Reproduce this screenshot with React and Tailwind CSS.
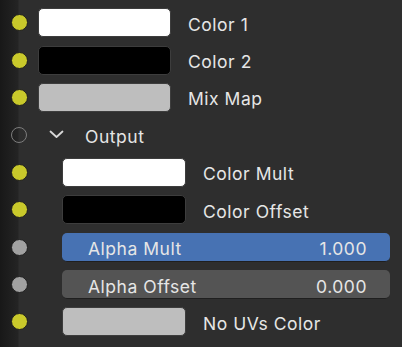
import React from 'react';

const yellow = 'bg-[#c9c92b]';

function Socket({ kind }) {
  if (kind === 'hollow') {
    return <span className="w-[16px] h-[16px] rounded-full border-[1.5px] border-[#7d7d7d] bg-transparent" />;
  }
  const fill = kind === 'gray' ? 'bg-[#a1a1a1]' : yellow;
  return <span className={`w-[17px] h-[17px] rounded-full border border-[#1e1e1e] ${fill}`} />;
}

function Row({ socket, children }) {
  return (
    <div className="flex items-center h-[37.4px]">
      <div className="w-[38px] flex justify-center">
        <Socket kind={socket} />
      </div>
      {children}
    </div>
  );
}

function Swatch({ color, indent, label }) {
  return (
    <div className={`flex items-center ${indent ? 'pl-[24px]' : ''}`}>
      <div className={`h-[29px] rounded-[5px] border border-[#3d3d3d] ${indent ? 'w-[124px]' : 'w-[133px]'} ${color}`} />
      <span className="ml-[17px] pt-[4px] text-[17.5px] tracking-[0.03em] text-[#e6e6e6]">{label}</span>
    </div>
  );
}

function Field({ label, value, active }) {
  return (
    <div className="pl-[24px] flex-1 pr-[12px]">
      <div className={`h-[29px] rounded-[5px] flex items-center justify-between px-[26px] text-[17.5px] tracking-[0.03em] text-[#e6e6e6] border-b border-[#1f1f1f] ${active ? 'bg-[#4772b3]' : 'bg-[#545454]'}`}>
        <span className="translate-y-[3px]">{label}</span>
        <span className="mr-[-3px] translate-y-[3px]">{value}</span>
      </div>
    </div>
  );
}

export default function App() {
  return (
    <div
      className="w-[402px] h-[347px] pt-[4px] bg-[linear-gradient(to_right,#181818_0px,#242424_18px,#2e2e2e_19px)] overflow-hidden"
      style={{ fontFamily: 'Inter, "Noto Sans", sans-serif' }}
    >
      <Row socket="yellow"><Swatch color="bg-white" label="Color 1" /></Row>
      <Row socket="yellow"><Swatch color="bg-black" label="Color 2" /></Row>
      <Row socket="yellow"><Swatch color="bg-[#bebebe]" label="Mix Map" /></Row>
      <Row socket="hollow">
        <div className="flex items-center pl-[11px]">
          <svg width="15" height="9" viewBox="0 0 15 9" fill="none">
            <polyline points="1.5,1.5 7.5,7 13.5,1.5" stroke="#d9d9d9" strokeWidth="1.8" strokeLinecap="round" strokeLinejoin="round" />
          </svg>
          <span className="ml-[21px] pt-[4px] text-[17.5px] tracking-[0.03em] text-[#e6e6e6]">Output</span>
        </div>
      </Row>
      <Row socket="yellow"><Swatch indent color="bg-white" label="Color Mult" /></Row>
      <Row socket="yellow"><Swatch indent color="bg-black" label="Color Offset" /></Row>
      <Row socket="gray"><Field active label="Alpha Mult" value="1.000" /></Row>
      <Row socket="gray"><Field label="Alpha Offset" value="0.000" /></Row>
      <Row socket="yellow"><Swatch indent color="bg-[#bebebe]" label="No UVs Color" /></Row>
    </div>
  );
}
